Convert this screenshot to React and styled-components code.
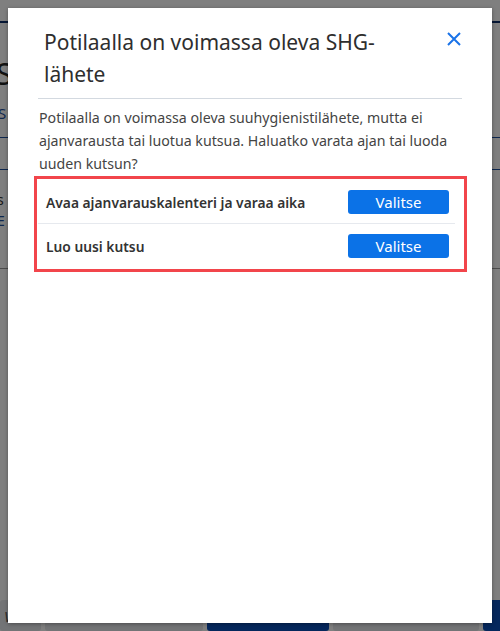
import React from "react";
import styled, { createGlobalStyle } from "styled-components";

const GlobalStyle = createGlobalStyle`
    html, body {
        margin: 0;
        padding: 0;
        background: #ffffff;
        font-family: "Noto Sans", "Open Sans", Arial, sans-serif;
        overflow: hidden;
    }
`;

const options = [
    { id: "calendar", label: "Avaa ajanvarauskalenteri ja varaa aika" },
    { id: "invite", label: "Luo uusi kutsu" },
];

// dimmed app behind the dialog
const Page = styled.div`
    position: relative;
    height: 631px;
    width: 500px;
    overflow: hidden;
    display: flex;
    flex-direction: column;
`;

const TopBar = styled.div`
    height: 21px;
    border-bottom: 2px solid #0c2f6b;
`;

const PageTitle = styled.h1`
    margin: 36px 0 0 -4px;
    font-size: 30px;
    font-weight: 400;
    color: #222;
    line-height: 30px;
`;

const PageLink = styled.a`
    display: block;
    margin: 14px 0 0 -2px;
    color: #1d4f9c;
    font-size: 15px;
`;

const Rule = styled.div`
    height: 1px;
    margin-top: ${(p) => p.$gap}px;
    background: ${(p) => p.$color || "#1d4f9c"};
`;

const SmallText = styled.div`
    margin: ${(p) => p.$gap}px 0 0 -3px;
    font-size: 14px;
    color: ${(p) => p.$color || "#333"};
`;

const Footer = styled.div`
    margin-top: auto;
    height: 31px;
    display: flex;
    gap: 4px;
`;

const FooterButton = styled.div`
    width: ${(p) => p.$w}px;
    flex-shrink: 0;
    background: ${(p) => (p.$primary ? "#0a4fb8" : "#e6e8ec")};
    border-radius: 3px;
    color: #555;
    font-size: 15px;
    font-style: italic;
    padding: 6px 4px;
    box-sizing: border-box;
`;

const Overlay = styled.div`
    position: absolute;
    inset: 0;
    background: rgba(0, 0, 0, 0.5);
`;

const Dialog = styled.div`
    position: absolute;
    left: 8px;
    top: 8px;
    width: 484px;
    height: 615px;
    background: #ffffff;
    box-shadow: 0 1px 4px rgba(0, 0, 0, 0.35);
    padding: 0 30px;
    box-sizing: border-box;
    display: flex;
    flex-direction: column;
`;

const Header = styled.div`
    display: flex;
    align-items: flex-start;
    justify-content: space-between;
    padding: 18px 0 8px 6px;
    border-bottom: 1px solid #d3d9e0;
`;

const Title = styled.h2`
    margin: 0;
    font-size: 21px;
    line-height: 32px;
    font-weight: 400;
    color: #2e2e2e;
    width: 350px;
`;

const CloseButton = styled.button`
    border: none;
    background: none;
    padding: 0;
    margin: 5px 0 0 0;
    width: 16px;
    height: 16px;
    cursor: pointer;
    display: flex;
`;

const Message = styled.p`
    margin: 7px 0 0 1px;
    font-size: 14.2px;
    line-height: 23px;
    color: #444;
`;

const OptionList = styled.div`
    margin: 4px 0 0 -1px;
    width: 427px;
    outline: 3px solid #f2454b;
    box-sizing: border-box;
    border: 1px solid transparent;
`;

const OptionRow = styled.div`
    position: relative;
    display: flex;
    align-items: center;
    justify-content: space-between;
    height: 44px;
    padding: 0 14px 0 8px;

    &::after {
        content: "";
        display: ${(p) => (p.$last ? "none" : "block")};
        position: absolute;
        left: 0;
        right: 8px;
        bottom: 0;
        height: 1px;
        background: #e6e9ee;
    }
`;

const OptionLabel = styled.span`
    font-size: 13.8px;
    font-weight: 600;
    color: #333;
`;

const SelectButton = styled.button`
    width: 101px;
    height: 24px;
    border: none;
    border-radius: 3px;
    background: #0b72e7;
    color: #ffffff;
    font-family: inherit;
    font-size: 15px;
    cursor: pointer;
`;

const App = () => {
    return (
        <>
            <GlobalStyle />
            <Page>
                <TopBar />
                <PageTitle>S</PageTitle>
                <PageLink>S</PageLink>
                <Rule $gap={14} />
                <Rule $gap={31} />
                <SmallText $gap={20}>s</SmallText>
                <SmallText $gap={2} $color="#1d4f9c">
                    E
                </SmallText>
                <Rule $gap={38} $color="#999" />
                <Footer>
                    <FooterButton $w={41}>Va</FooterButton>
                    <FooterButton $w={158} />
                    <FooterButton $w={122} $primary />
                    <FooterButton $w={146} />
                    <FooterButton $w={26} $primary />
                </Footer>
                <Overlay />
                <Dialog role="dialog">
                    <Header>
                        <Title>Potilaalla on voimassa oleva SHG-lähete</Title>
                        <CloseButton aria-label="Sulje">
                            <svg width="16" height="16" viewBox="0 0 16 16">
                                <path
                                    d="M2 2 L14 14 M14 2 L2 14"
                                    stroke="#1a73e8"
                                    strokeWidth="2"
                                    fill="none"
                                />
                            </svg>
                        </CloseButton>
                    </Header>
                    <Message>
                        Potilaalla on voimassa oleva suuhygienistilähete, mutta
                        ei ajanvarausta tai luotua kutsua. Haluatko varata ajan
                        tai luoda uuden kutsun?
                    </Message>
                    <OptionList>
                        {options.map((option, i) => (
                            <OptionRow
                                key={option.id}
                                $last={i === options.length - 1}
                            >
                                <OptionLabel>{option.label}</OptionLabel>
                                <SelectButton>Valitse</SelectButton>
                            </OptionRow>
                        ))}
                    </OptionList>
                </Dialog>
            </Page>
        </>
    );
};

export default App;
